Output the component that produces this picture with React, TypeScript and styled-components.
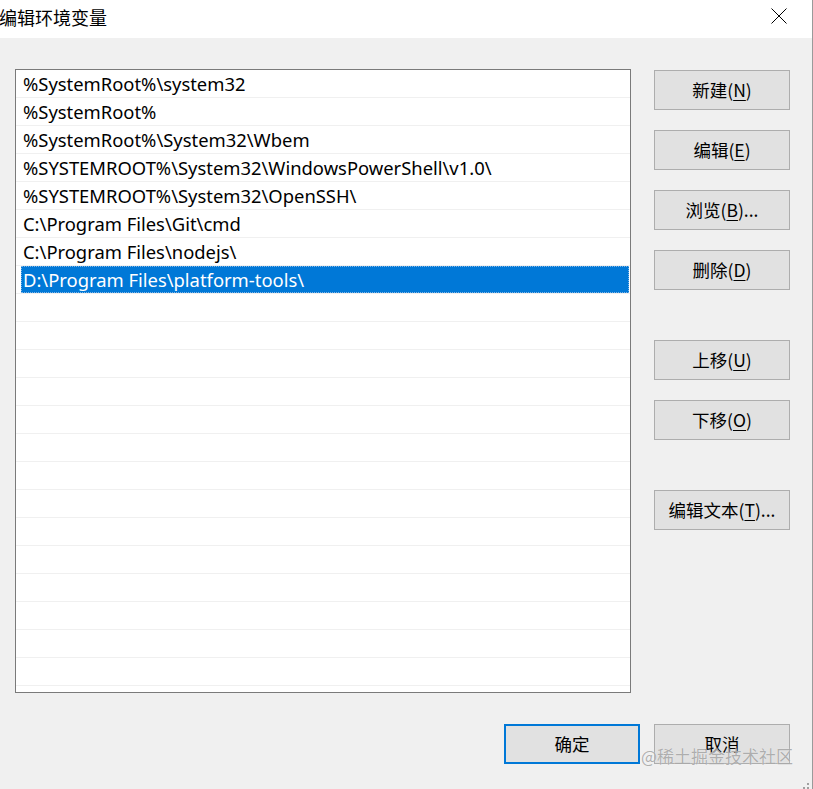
import styled, { createGlobalStyle } from "styled-components";

const GlobalStyle = createGlobalStyle`
  html, body {
    margin: 0;
    padding: 0;
    background: #f0f0f0;
  }
  body {
    font-family: "Noto Sans", "Noto Sans CJK SC", sans-serif;
  }
`;

const Window = styled.div`
  position: relative;
  width: 813px;
  height: 789px;
  background: #f0f0f0;
  overflow: hidden;
  box-sizing: border-box;
  border-right: 1px solid #9a9a9a;
`;

const TitleBar = styled.div`
  height: 38px;
  background: #ffffff;
  display: flex;
  align-items: center;
  justify-content: space-between;
`;

const Title = styled.div`
  font-size: 18px;
  color: #000;
  margin-left: -1px;
  margin-top: -4px;
  font-family: "Noto Sans CJK SC", sans-serif;
`;

const CloseButton = styled.div`
  width: 46px;
  height: 38px;
  display: flex;
  align-items: center;
  justify-content: center;
  margin-right: 10px;
  margin-top: -6px;
`;

const Body = styled.div`
  padding: 31px 22px 0 15px;
  display: flex;
  flex-direction: column;
`;

const Main = styled.div`
  display: flex;
  gap: 23px;
`;

const ListBox = styled.div`
  width: 616px;
  height: 624px;
  box-sizing: border-box;
  border: 1px solid #7a7a7a;
  background: #ffffff;
  overflow: hidden;
`;

const Row = styled.div`
  height: 27px;
  border-bottom: 1px solid #f0f0f0;
  display: flex;
`;

const RowInner = styled.div<{ $selected?: boolean }>`
  flex: 1;
  margin: 0 1px 0 5px;
  padding-left: 2px;
  display: flex;
  align-items: center;
  font-size: 18.4px;
  color: ${(p) => (p.$selected ? "#ffffff" : "#000000")};
  background: ${(p) => (p.$selected ? "#0078d7" : "transparent")};
  outline: ${(p) => (p.$selected ? "1px dotted #7fb5e6" : "none")};
  outline-offset: -1px;
  white-space: nowrap;
`;

const ButtonColumn = styled.div`
  display: flex;
  flex-direction: column;
  width: 136px;
  padding-top: 1px;
`;

const Button = styled.div<{ $gap?: number; $primary?: boolean }>`
  margin-top: ${(p) => p.$gap ?? 0}px;
  width: 136px;
  height: 40px;
  box-sizing: border-box;
  background: #e1e1e1;
  border: ${(p) => (p.$primary ? "2px solid #0078d7" : "1px solid #adadad")};
  display: flex;
  align-items: center;
  justify-content: center;
  font-size: 17.5px;
  color: #000;
  font-family: "Noto Sans CJK SC", sans-serif;
  padding-bottom: 1px;

  u {
    text-decoration-thickness: 1px;
    text-underline-offset: 3px;
  }
`;

const Footer = styled.div`
  display: flex;
  justify-content: flex-end;
  gap: 14px;
  margin-top: 31px;
`;

const Watermark = styled.div`
  position: absolute;
  left: 641px;
  top: 743px;
  font-size: 17px;
  color: rgba(150, 150, 150, 0.75);
  font-family: "Noto Sans CJK SC", sans-serif;
  text-shadow: 0 0 1px rgba(255, 255, 255, 0.8);
  white-space: nowrap;
  pointer-events: none;
`;

const Grip = styled.div`
  position: absolute;
  right: 3px;
  bottom: 3px;
  width: 10px;
  height: 10px;
`;

const paths = [
  "%SystemRoot%\\system32",
  "%SystemRoot%",
  "%SystemRoot%\\System32\\Wbem",
  "%SYSTEMROOT%\\System32\\WindowsPowerShell\\v1.0\\",
  "%SYSTEMROOT%\\System32\\OpenSSH\\",
  "C:\\Program Files\\Git\\cmd",
  "C:\\Program Files\\nodejs\\",
  "D:\\Program Files\\platform-tools\\",
];

const TOTAL_ROWS = 23;
const SELECTED = 7;

const buttons = [
  { label: "新建", key: "N", gap: 0 },
  { label: "编辑", key: "E", gap: 20 },
  { label: "浏览", key: "B", gap: 20, dots: true },
  { label: "删除", key: "D", gap: 20 },
  { label: "上移", key: "U", gap: 50 },
  { label: "下移", key: "O", gap: 20 },
  { label: "编辑文本", key: "T", gap: 50, dots: true },
];

const App = () => {
  const rows = Array.from({ length: TOTAL_ROWS }, (_, i) => paths[i] ?? "");

  return (
    <Window>
      <GlobalStyle />
      <TitleBar>
        <Title>编辑环境变量</Title>
        <CloseButton>
          <svg width="16" height="16" viewBox="0 0 16 16">
            <path d="M0.5 0.5 L15.5 15.5 M15.5 0.5 L0.5 15.5" stroke="#000" strokeWidth="1" fill="none" />
          </svg>
        </CloseButton>
      </TitleBar>
      <Body>
        <Main>
          <ListBox>
            {rows.map((text, i) => (
              <Row key={i}>
                <RowInner $selected={i === SELECTED}>{text}</RowInner>
              </Row>
            ))}
          </ListBox>
          <ButtonColumn>
            {buttons.map((b) => (
              <Button key={b.label} $gap={b.gap}>
                {b.label}(<u>{b.key}</u>){b.dots ? "..." : ""}
              </Button>
            ))}
          </ButtonColumn>
        </Main>
        <Footer>
          <Button $primary>确定</Button>
          <Button>取消</Button>
        </Footer>
      </Body>
      <Watermark>@稀土掘金技术社区</Watermark>
      <Grip>
        <svg width="10" height="10" viewBox="0 0 10 10">
          <rect x="8" y="0" width="2" height="2" fill="#a0a0a0" />
          <rect x="4" y="4" width="2" height="2" fill="#a0a0a0" />
          <rect x="8" y="4" width="2" height="2" fill="#a0a0a0" />
          <rect x="0" y="8" width="2" height="2" fill="#a0a0a0" />
          <rect x="4" y="8" width="2" height="2" fill="#a0a0a0" />
          <rect x="8" y="8" width="2" height="2" fill="#a0a0a0" />
        </svg>
      </Grip>
    </Window>
  );
};

export default App;
